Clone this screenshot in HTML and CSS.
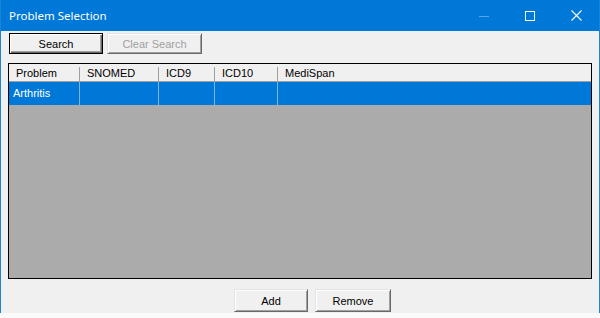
FILE: index.html
```html
<!DOCTYPE html>
<html lang="en">
<head>
  <meta charset="UTF-8">
  <title>Problem Selection</title>
  <link rel="stylesheet" href="styles.css">
</head>
<body>
  <div class="window">
    <div class="titlebar">
      <span class="title">Problem Selection</span>
      <div class="controls">
        <span class="ctl">
          <svg width="10" height="10" viewBox="0 0 10 10"><path d="M0 5.5H10" stroke="#5aa6e6" stroke-width="1"/></svg>
        </span>
        <span class="ctl">
          <svg width="10" height="10" viewBox="0 0 10 10"><rect x="0.5" y="0.5" width="9" height="9" fill="none" stroke="#fff" stroke-width="1"/></svg>
        </span>
        <span class="ctl">
          <svg width="11" height="11" viewBox="0 0 11 11"><path d="M0.5 0.5L10.5 10.5M10.5 0.5L0.5 10.5" stroke="#fff" stroke-width="1.1"/></svg>
        </span>
      </div>
    </div>

    <div class="content">
      <div class="toolbar">
        <button class="btn default">Search</button>
        <button class="btn" disabled>Clear Search</button>
      </div>

      <div class="grid">
        <div class="grid-head">
          <div class="hcell c1">Problem</div>
          <div class="hcell c2">SNOMED</div>
          <div class="hcell c3">ICD9</div>
          <div class="hcell c4">ICD10</div>
          <div class="hcell c5">MediSpan</div>
        </div>
        <div class="grid-row selected">
          <div class="cell c1">Arthritis</div>
          <div class="cell c2"></div>
          <div class="cell c3"></div>
          <div class="cell c4"></div>
          <div class="cell c5"></div>
        </div>
      </div>

      <div class="actions">
        <button class="btn add">Add</button>
        <button class="btn remove">Remove</button>
      </div>
    </div>
  </div>
</body>
</html>
```

FILE: styles.css
```css
body {
  margin: 0;
  background: #fafafa;
  font-family: "Liberation Sans", Arial, sans-serif;
  font-size: 11px;
  color: #000;
}
.window {
  width: 598px;
  height: 313px;
  border-left: 1px solid #1883d7;
  border-right: 1px solid #1883d7;
  background: #f0f0f0;
  display: flex;
  flex-direction: column;
}

/* title bar */
.titlebar {
  height: 31px;
  background: #0078d7;
  color: #fff;
  display: flex;
  align-items: center;
}
.title {
  font-family: "Noto Sans", "Open Sans", sans-serif;
  font-size: 11.5px;
  padding-left: 8px;
  flex: 1;
  margin-top: -1px;
}
.controls {
  display: flex;
  height: 100%;
}
.ctl {
  width: 46px;
  display: flex;
  align-items: center;
  justify-content: center;
}
.ctl svg {
  display: block;
}

.content {
  flex: 1;
  display: flex;
  flex-direction: column;
}

/* buttons */
.toolbar {
  display: flex;
  gap: 4px;
  padding: 2px 0 0 8px;
}
.btn {
  font-family: "Liberation Sans", Arial, sans-serif;
  font-size: 11px;
  color: #000;
  background: #f0f0f0;
  height: 21px;
  width: 95px;
  padding: 0;
  border: 1px solid;
  border-color: #e3e3e3 #696969 #696969 #e3e3e3;
  box-shadow: inset 1px 1px #fff, inset -1px -1px #a0a0a0;
}
.btn.default {
  width: 94px;
  border-color: #000;
  box-shadow: inset 1px 1px #fff, inset -1px -1px #696969, inset -2px -2px #a0a0a0;
}
.btn:disabled {
  color: #a0a0a0;
}

/* data grid */
.grid {
  margin: 9px 0 0 7px;
  width: 582px;
  height: 214px;
  border: 1px solid #000;
  background: #ababab;
}
.grid-head,
.grid-row {
  display: grid;
  grid-template-columns: 71px 79px 56px 63px 1fr;
}
.grid-head {
  height: 17px;
  background: #f0f0f0;
  border-bottom: 1px solid #a0a0a0;
}
.hcell {
  margin-top: 3px;
  padding-left: 7px;
  border-right: 1px solid #a0a0a0;
  line-height: 13px;
}
.hcell.c5 {
  border-right: none;
}
.grid-row {
  height: 23px;
}
.grid-row.selected {
  background: #0078d7;
  color: #fff;
}
.cell {
  padding-left: 4px;
  line-height: 23px;
  border-right: 1px solid #7fb3e3;
}
.cell.c5 {
  border-right: none;
}

.actions {
  display: flex;
  gap: 7px;
  padding: 10px 0 0 233px;
}
.actions .btn {
  height: 23px;
}
.btn.add {
  width: 74px;
}
.btn.remove {
  width: 76px;
}
```
